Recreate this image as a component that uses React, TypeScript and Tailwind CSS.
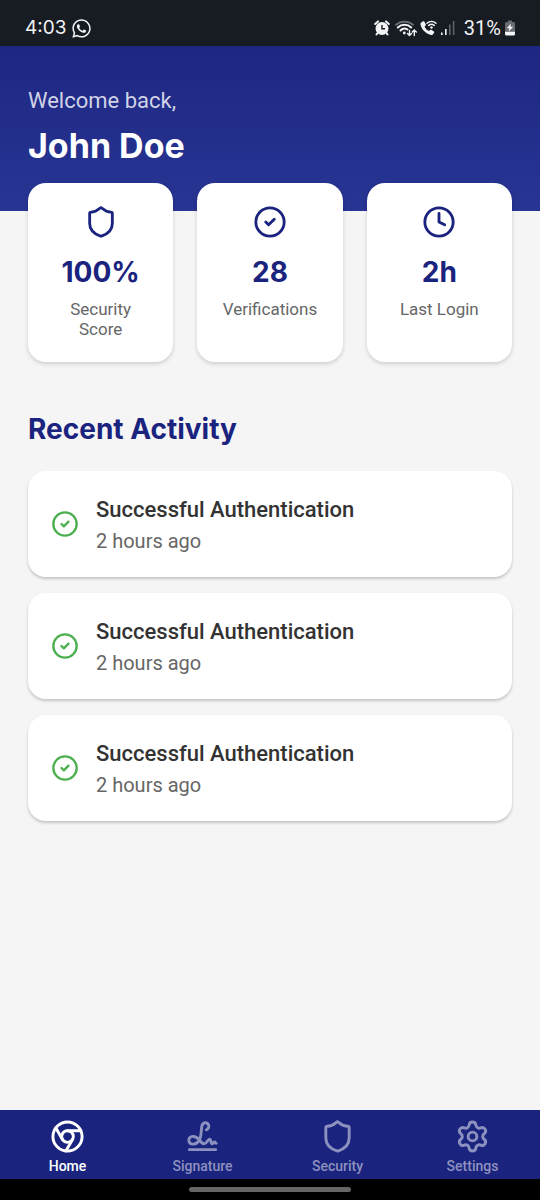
import { Chromium, CircleCheck, Clock, Settings, Shield } from "lucide-react";
import type { LucideIcon } from "lucide-react";
import { FaWhatsapp } from "react-icons/fa";

interface StatProps {
  icon: LucideIcon;
  value: string;
  label: string;
}

const SignatureIcon = ({ size = 24 }: { size?: number | string }) => (
  <svg
    viewBox="0 0 24 24"
    width={size}
    height={size}
    fill="none"
    stroke="currentColor"
    strokeWidth="2"
    strokeLinecap="round"
    strokeLinejoin="round"
  >
    <path d="M14.6 7.4C16.2 6.8 16.7 5.2 16.1 3.9C15.2 2 12.3 2 11.6 4.7C11.1 7 11.4 10 10.4 13C9.4 15.9 7.2 17.4 5 17.2C2.700 17 1.900 14.500 3.200 12.800C4.700 11.100 7.600 12.100 9.200 13.700C10.500 15 11.400 17 13.100 17C15 17 15.500 13.900 16.800 13.900C18.100 13.900 17.500 17 18.700 17C19.400 17 19.500 15.700 20.200 15.700C20.800 15.700 20.800 16.700 21.400 16.700" />
    <path d="M3 21h18" />
  </svg>
);

const stats: StatProps[] = [
  { icon: Shield, value: "100%", label: "Security Score" },
  { icon: CircleCheck, value: "28", label: "Verifications" },
  { icon: Clock, value: "2h", label: "Last Login" },
];

const activities = [
  { id: 1, title: "Successful Authentication", time: "2 hours ago" },
  { id: 2, title: "Successful Authentication", time: "2 hours ago" },
  { id: 3, title: "Successful Authentication", time: "2 hours ago" },
];

const tabs = [
  { name: "Home", icon: Chromium, active: true },
  { name: "Signature", icon: SignatureIcon, active: false },
  { name: "Security", icon: Shield, active: false },
  { name: "Settings", icon: Settings, active: false },
];

const AlarmIcon = () => (
  <svg viewBox="0 0 16 16" className="mr-0.5 h-4 w-4" fill="none" stroke="#f1f3f5">
    <circle cx="8" cy="8.5" r="6.5" fill="#f1f3f5" stroke="none" />
    <path d="M1.2 4 4 1.4M14.8 4 12 1.4M3.5 13l-1 1.5M12.5 13l1 1.5" strokeWidth="2" strokeLinecap="round" />
    <path d="M8 5v3.8h3" stroke="#171b22" strokeWidth="1.4" />
  </svg>
);

const WifiIcon = () => (
  <svg viewBox="0 0 22 17" className="h-[17px] w-[22px]" fill="none" stroke="#f1f3f5" strokeLinecap="round">
    <path d="M1 4.7a13 13 0 0 1 17 0" stroke="#6b7078" strokeWidth="1.8" />
    <path d="M2.8 7.5a9.5 9.5 0 0 1 13.4 0M5.5 10.5a5.5 5.5 0 0 1 7-1" strokeWidth="2" />
    <circle cx="9.3" cy="13" r="1.4" fill="#f1f3f5" stroke="none" />
    <path d="M14.5 10.5v5m-2-2 2 2 2-2M19.3 15.5V10m-2 2 2-2 2 2" strokeWidth="1.4" />
  </svg>
);

const WifiCallIcon = () => (
  <svg viewBox="0 0 17 16" className="h-4 w-[17px]" fill="none" stroke="#f1f3f5" strokeLinecap="round">
    <path
      d="M1.2 2.6 3 1.3c.5-.3 1-.2 1.3.3l1.5 2.6c.3.5.2 1-.2 1.4l-1 1c.7 1.9 2.4 3.6 4.4 4.5l1.2-1.1c.4-.4.9-.4 1.4-.1l2.3 1.5c.5.4.6.9.2 1.4l-1.3 1.6c-.5.6-1.2.8-2 .6C5.7 13.8 1.5 9.5.5 4.6c-.2-.8.1-1.5.7-2z"
      fill="#f1f3f5"
      stroke="none"
    />
    <path d="M7 3.2a7 7 0 0 1 9 0M8.8 5.4a4.2 4.2 0 0 1 5.4 0" strokeWidth="1.5" />
    <circle cx="11.5" cy="7.5" r="1.2" fill="#f1f3f5" stroke="none" />
  </svg>
);

const SignalIcon = () => (
  <svg viewBox="0 0 15 16" className="h-4 w-[15px]" fill="#f1f3f5">
    <rect x="1" y="12.5" width="1.6" height="2.5" />
    <rect x="5" y="9" width="1.6" height="6" />
    <rect x="9" y="4.5" width="1.6" height="10.5" fill="#5d6269" />
    <rect x="12.8" y="1" width="1.6" height="14" fill="#5d6269" />
  </svg>
);

const BatteryIcon = () => (
  <svg viewBox="0 0 12 16" className="h-4 w-3" fill="#f1f3f5">
    <path d="M4 .5h4V2h1.5A1.5 1.5 0 0 1 11 3.5V11H1V3.5A1.5 1.5 0 0 1 2.5 2H4z" fill="#686c72" />
    <path d="M1 11.5h10V14a1.5 1.5 0 0 1-1.5 1.5h-7A1.5 1.5 0 0 1 1 14z" />
    <path d="M6.8 3.5 2.8 8.3h2.5l-.6 3.2 4.5-4.8H6.5z" />
  </svg>
);

const StatusBar = () => (
  <div className="flex h-[46px] items-center justify-between bg-[#171b22] pt-2.5 pr-6 pl-[25px] text-[#f1f3f5]">
    <div className="flex items-center gap-[5px] font-['Inter',sans-serif] text-[19px]">
      <span>4:03</span>
      <FaWhatsapp className="h-[21px] w-[21px]" />
    </div>
    <div className="flex items-center gap-[3px]">
      <AlarmIcon />
      <WifiIcon />
      <WifiCallIcon />
      <SignalIcon />
      <span className="pl-1.5 text-xl">31%</span>
      <BatteryIcon />
    </div>
  </div>
);

const StatCard = ({ icon: Icon, value, label }: StatProps) => (
  <div className="flex min-h-[179px] flex-1 flex-col items-center rounded-[18px] bg-white px-6 pt-[22px] text-center shadow-[0_2px_4px_rgba(0,0,0,0.16)]">
    <Icon size={34} className="text-[#1a237e]" />
    <p className="mt-[15px] font-['Inter',sans-serif] text-[28px] leading-9 font-bold text-[#1a237e]">{value}</p>
    <p className="mt-[9px] text-[17px] leading-5 text-[#666666]">{label}</p>
  </div>
);

const App = () => {
  return (
    <div className="flex min-h-screen flex-col bg-[#f5f5f5] font-['Roboto',sans-serif]">
      <StatusBar />

      <header className="bg-linear-to-b from-[#1e2783] to-[#283593] px-7 pt-[41px] pb-[41px]">
        <p className="text-[22px] leading-7 text-[#d1d3e6]">Welcome back,</p>
        <h1 className="mt-1.5 font-['Inter',sans-serif] text-[34px] leading-[49px] font-bold text-white">John Doe</h1>
      </header>

      <main className="flex-1 px-7">
        <section className="-mt-7 flex gap-6">
          {stats.map((stat) => (
            <StatCard key={stat.label} {...stat} />
          ))}
        </section>

        <section className="mt-[49px]">
          <h2 className="font-['Inter',sans-serif] text-[28px] leading-9 font-bold text-[#1a237e]">Recent Activity</h2>
          <ul className="mt-6 flex flex-col gap-4">
            {activities.map((activity) => (
              <li
                key={activity.id}
                className="flex items-center gap-[17px] rounded-[18px] bg-white px-[23px] py-6 shadow-[0_2px_3px_rgba(0,0,0,0.2)]"
              >
                <CircleCheck size={28} className="text-[#4caf50]" />
                <div>
                  <p className="text-[22px] leading-[30px] font-medium text-[#333333]">{activity.title}</p>
                  <p className="mt-1 text-[20px] leading-6 text-[#666666]">{activity.time}</p>
                </div>
              </li>
            ))}
          </ul>
        </section>
      </main>

      <nav className="flex h-[69px] bg-[#1a237e]">
        {tabs.map(({ name, icon: Icon, active }) => (
          <button
            key={name}
            type="button"
            className={`flex flex-1 cursor-pointer flex-col items-center pt-[9px] text-sm font-medium ${active ? "text-white" : "text-[#8d91bf]"}`}
          >
            <Icon size={35} />
            <span className="mt-0.5">{name}</span>
          </button>
        ))}
      </nav>
      <div className="flex h-[21px] items-center justify-center bg-black">
        <div className="h-[5px] w-[162px] rounded-full bg-[#666666]" />
      </div>
    </div>
  );
};

export default App;
